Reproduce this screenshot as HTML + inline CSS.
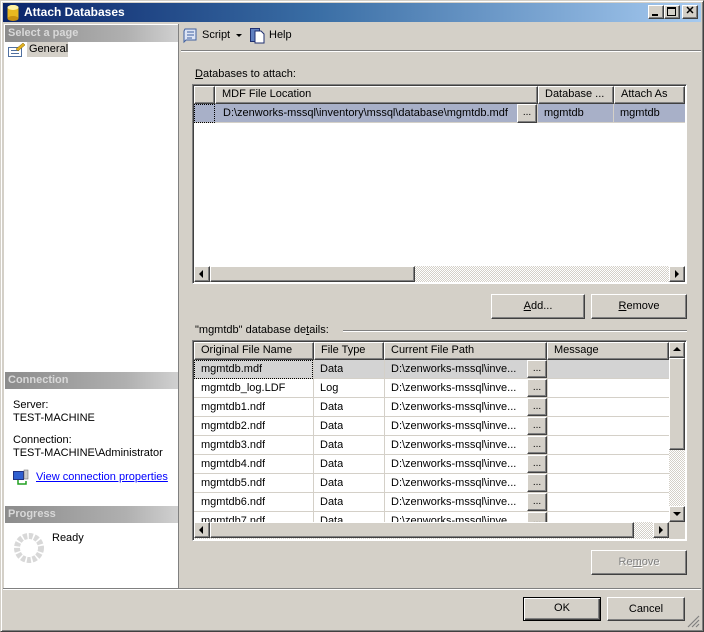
<!DOCTYPE html>
<html><head><meta charset="utf-8"><style>
*{box-sizing:border-box;margin:0;padding:0}
body{width:704px;height:632px;overflow:hidden;background:#d4d0c8;font-family:"Liberation Sans",Arial,sans-serif;font-size:11px;color:#000;position:relative}
.a{position:absolute}
.btn{position:absolute;background:#d4d0c8;border:1px solid;border-color:#fff #404040 #404040 #fff;box-shadow:inset -1px -1px 0 #808080;text-align:center}
.hd{position:absolute;background:#d4d0c8;border:1px solid;border-color:#fff #404040 #404040 #fff;box-shadow:inset -1px -1px 0 #808080;padding-left:6px;line-height:15px;white-space:nowrap;overflow:hidden}
.ph{position:absolute;left:5px;width:173px;height:17px;background:linear-gradient(90deg,#8c8c8c,#b0b0b0 70%,#d0d0d0);color:#d8d8d8;font-weight:bold;font-size:11px;padding-left:3px;line-height:17px}
.cell{position:absolute;white-space:nowrap;overflow:hidden;line-height:18px}
.row{position:absolute;left:194px;width:475px;height:19px;border-bottom:1px solid #d4d0c8;background:#fff}
.dots{position:absolute;width:20px;height:18px;background:#d4d0c8;border:1px solid;border-color:#fff #404040 #404040 #fff;box-shadow:inset -1px -1px 0 #808080;text-align:center;line-height:16px;font-size:10px}
.hatch{background:repeating-conic-gradient(#d4d0c8 0 25%,#fff 0 50%) 0 0/2px 2px}
.arr{position:absolute;width:16px;height:16px;background:#d4d0c8;border:1px solid;border-color:#fff #404040 #404040 #fff;box-shadow:inset -1px -1px 0 #808080}
</style></head><body>
<!-- window frame -->
<div class="a" style="left:0;top:0;width:704px;height:632px;border:1px solid;border-color:#d4d0c8 #404040 #404040 #d4d0c8;box-shadow:inset 1px 1px 0 #fff,inset -1px -1px 0 #808080"></div>
<div class="a" style="left:3px;top:3px;width:698px;height:19px;background:linear-gradient(90deg,#0a246a,#3a6ea5 45%,#a6caf0)"></div>
<svg class="a" style="left:6px;top:4px" width="14" height="17"><ellipse cx="7" cy="3.5" rx="5.5" ry="2.5" fill="#f8e080"/><rect x="1.5" y="3.5" width="11" height="11" fill="#e8b820"/><ellipse cx="7" cy="14.5" rx="5.5" ry="2.5" fill="#c89010"/><ellipse cx="7" cy="3.5" rx="5.5" ry="2.5" fill="#fff0a0"/></svg>
<div class="a" style="left:24px;top:5px;color:#fff;font-weight:bold;font-size:12px">Attach Databases</div>
<div class="btn" style="left:648px;top:5px;width:16px;height:14px"><div class="a" style="left:3px;top:8px;width:6px;height:2px;background:#000"></div></div>
<div class="btn" style="left:664px;top:5px;width:16px;height:14px"><div class="a" style="left:2px;top:1px;width:9px;height:9px;border:1px solid #000;border-top-width:2px"></div></div>
<div class="btn" style="left:682px;top:5px;width:16px;height:14px;font-weight:bold;font-size:11px;line-height:11px">✕</div>

<!-- left panel -->
<div class="a" style="left:4px;top:24px;width:175px;height:565px;background:#fff;border-right:1px solid #808080"></div>
<div class="ph" style="top:25px">Select a page</div>
<svg class="a" style="left:8px;top:43px" width="17" height="14"><rect x="0.5" y="4.5" width="13" height="9" fill="#fff" stroke="#5070a0"/><line x1="3" y1="7.5" x2="11" y2="7.5" stroke="#5070a0"/><line x1="3" y1="10.5" x2="11" y2="10.5" stroke="#5070a0"/><path d="M8 6 L15 0 L17 2 L10 8Z" fill="#e0b020" stroke="#806000" stroke-width=".5"/></svg>
<div class="a" style="left:27px;top:42px;width:41px;height:15px;background:#d4d0c8;padding-left:2px;line-height:15px">General</div>
<div class="ph" style="top:372px">Connection</div>
<div class="a" style="left:13px;top:399px;line-height:13px">Server:<br>TEST-MACHINE</div>
<div class="a" style="left:13px;top:434px;line-height:13px">Connection:<br>TEST-MACHINE\Administrator</div>
<svg class="a" style="left:13px;top:469px" width="17" height="16"><rect x="0.5" y="2.5" width="10" height="8" fill="#3060d0" stroke="#203080"/><rect x="11" y="1" width="4" height="9" fill="#ccc" stroke="#666" stroke-width=".5"/><path d="M5 11v4h8v-3" stroke="#20a020" stroke-width="1.5" fill="none"/></svg>
<div class="a" style="left:36px;top:471px;color:#0000ff;text-decoration:underline">View connection properties</div>
<div class="ph" style="top:506px">Progress</div>
<svg class="a" style="left:13px;top:532px" width="32" height="32"><circle cx="16" cy="16" r="12" fill="none" stroke="#d8d8d8" stroke-width="6" stroke-dasharray="4 1.6"/></svg>
<div class="a" style="left:52px;top:532px">Ready</div>

<!-- toolbar -->
<div class="a" style="left:181px;top:50px;width:520px;height:1px;background:#808080"></div>
<div class="a" style="left:181px;top:51px;width:520px;height:1px;background:#fff"></div>
<svg class="a" style="left:182px;top:27px" width="17" height="17"><path d="M3 2h11v11H4l-2 2V4z" fill="#dde4f4" stroke="#4060a0"/><path d="M5 5h7M5 8h7M5 11h5" stroke="#4060a0"/></svg>
<div class="a" style="left:202px;top:29px">Script</div>
<div class="a" style="left:236px;top:34px;border:3px solid transparent;border-top:3px solid #000"></div>
<svg class="a" style="left:249px;top:27px" width="17" height="17"><rect x="1.5" y="1.5" width="9" height="13" fill="#6080c0" stroke="#203070"/><path d="M6 4h6l3 3v9H6z" fill="#fff" stroke="#203070"/></svg>
<div class="a" style="left:269px;top:29px">Help</div>

<!-- grid 1 -->
<div class="a" style="left:195px;top:68px"><u>D</u>atabases to attach:</div>
<div class="a" style="left:192px;top:84px;width:495px;height:200px;background:#fff;border:1px solid;border-color:#808080 #fff #fff #808080;box-shadow:inset 1px 1px 0 #404040"></div>
<div class="hd" style="left:194px;top:86px;width:21px;height:18px"></div>
<div class="hd" style="left:215px;top:86px;width:323px;height:18px">MDF File Location</div>
<div class="hd" style="left:538px;top:86px;width:76px;height:18px">Database ...</div>
<div class="hd" style="left:614px;top:86px;width:71px;height:18px">Attach As</div>
<div class="a" style="left:194px;top:104px;width:491px;height:19px;background:#a8b0c8;border-bottom:1px solid #d4d0c8"></div>
<div class="a" style="left:194px;top:104px;width:21px;height:19px;border:1px dotted #000"></div>
<div class="cell" style="left:223px;top:104px">D:\zenworks-mssql\inventory\mssql\database\mgmtdb.mdf</div>
<div class="dots" style="left:517px;top:104px;height:19px">...</div>
<div class="cell" style="left:544px;top:104px">mgmtdb</div>
<div class="cell" style="left:620px;top:104px">mgmtdb</div>
<div class="a" style="left:537px;top:104px;width:1px;height:19px;background:#d4d0c8"></div>
<div class="a" style="left:613px;top:104px;width:1px;height:19px;background:#d4d0c8"></div>
<div class="a hatch" style="left:194px;top:266px;width:491px;height:16px"></div>
<div class="arr" style="left:194px;top:266px"><div class="a" style="left:4px;top:3px;border:4px solid transparent;border-right:4px solid #000;border-left:0"></div></div>
<div class="btn" style="left:210px;top:266px;width:205px;height:16px"></div>
<div class="arr" style="left:669px;top:266px"><div class="a" style="left:5px;top:3px;border:4px solid transparent;border-left:4px solid #000;border-right:0"></div></div>

<div class="btn" style="left:491px;top:294px;width:94px;height:25px;line-height:22px"><u>A</u>dd...</div>
<div class="btn" style="left:591px;top:294px;width:96px;height:25px;line-height:22px"><u>R</u>emove</div>

<!-- grid 2 -->
<div class="a" style="left:195px;top:324px">"mgmtdb" database de<u>t</u>ails:</div>
<div class="a" style="left:343px;top:330px;width:344px;height:1px;background:#808080"></div>
<div class="a" style="left:343px;top:331px;width:344px;height:1px;background:#fff"></div>
<div class="a" style="left:192px;top:340px;width:495px;height:201px;background:#fff;border:1px solid;border-color:#808080 #fff #fff #808080;box-shadow:inset 1px 1px 0 #404040"></div>
<div class="hd" style="left:194px;top:342px;width:120px;height:18px">Original File Name</div>
<div class="hd" style="left:314px;top:342px;width:70px;height:18px">File Type</div>
<div class="hd" style="left:384px;top:342px;width:163px;height:18px">Current File Path</div>
<div class="hd" style="left:547px;top:342px;width:122px;height:18px">Message</div>

<div class="row" style="top:360px;background:#d3d3d3"></div>
<div class="a" style="left:194px;top:360px;width:119px;height:19px;border:1px dotted #000"></div>
<div class="row" style="top:379px"></div><div class="row" style="top:398px"></div><div class="row" style="top:417px"></div><div class="row" style="top:436px"></div><div class="row" style="top:455px"></div><div class="row" style="top:474px"></div><div class="row" style="top:493px"></div><div class="row" style="top:512px;height:10px;border:0"></div>
<div class="a" style="left:313px;top:360px;width:1px;height:162px;background:#d4d0c8"></div>
<div class="a" style="left:384px;top:360px;width:1px;height:162px;background:#d4d0c8"></div>
<div class="a" style="left:547px;top:360px;width:1px;height:162px;background:#d4d0c8"></div>

<div class="cell" style="left:201px;top:360px">mgmtdb.mdf</div><div class="cell" style="left:320px;top:360px">Data</div><div class="cell" style="left:391px;top:360px">D:\zenworks-mssql\inve...</div><div class="dots" style="left:527px;top:360px">...</div>
<div class="cell" style="left:201px;top:379px">mgmtdb_log.LDF</div><div class="cell" style="left:320px;top:379px">Log</div><div class="cell" style="left:391px;top:379px">D:\zenworks-mssql\inve...</div><div class="dots" style="left:527px;top:379px">...</div>
<div class="cell" style="left:201px;top:398px">mgmtdb1.ndf</div><div class="cell" style="left:320px;top:398px">Data</div><div class="cell" style="left:391px;top:398px">D:\zenworks-mssql\inve...</div><div class="dots" style="left:527px;top:398px">...</div>
<div class="cell" style="left:201px;top:417px">mgmtdb2.ndf</div><div class="cell" style="left:320px;top:417px">Data</div><div class="cell" style="left:391px;top:417px">D:\zenworks-mssql\inve...</div><div class="dots" style="left:527px;top:417px">...</div>
<div class="cell" style="left:201px;top:436px">mgmtdb3.ndf</div><div class="cell" style="left:320px;top:436px">Data</div><div class="cell" style="left:391px;top:436px">D:\zenworks-mssql\inve...</div><div class="dots" style="left:527px;top:436px">...</div>
<div class="cell" style="left:201px;top:455px">mgmtdb4.ndf</div><div class="cell" style="left:320px;top:455px">Data</div><div class="cell" style="left:391px;top:455px">D:\zenworks-mssql\inve...</div><div class="dots" style="left:527px;top:455px">...</div>
<div class="cell" style="left:201px;top:474px">mgmtdb5.ndf</div><div class="cell" style="left:320px;top:474px">Data</div><div class="cell" style="left:391px;top:474px">D:\zenworks-mssql\inve...</div><div class="dots" style="left:527px;top:474px">...</div>
<div class="cell" style="left:201px;top:493px">mgmtdb6.ndf</div><div class="cell" style="left:320px;top:493px">Data</div><div class="cell" style="left:391px;top:493px">D:\zenworks-mssql\inve...</div><div class="dots" style="left:527px;top:493px">...</div>
<div class="a" style="left:194px;top:512px;width:475px;height:10px;overflow:hidden">
<div class="cell" style="left:7px;top:0">mgmtdb7.ndf</div><div class="cell" style="left:126px;top:0">Data</div><div class="cell" style="left:197px;top:0">D:\zenworks-mssql\inve...</div><div class="dots" style="left:333px;top:0">...</div></div>

<div class="a hatch" style="left:669px;top:342px;width:16px;height:180px"></div>
<div class="arr" style="left:669px;top:342px"><div class="a" style="left:3px;top:4px;border:4px solid transparent;border-bottom:4px solid #000;border-top:0"></div></div>
<div class="btn" style="left:669px;top:358px;width:16px;height:92px"></div>
<div class="arr" style="left:669px;top:506px"><div class="a" style="left:3px;top:5px;border:4px solid transparent;border-top:4px solid #000;border-bottom:0"></div></div>
<div class="a hatch" style="left:194px;top:522px;width:475px;height:17px"></div>
<div class="arr" style="left:194px;top:522px"><div class="a" style="left:4px;top:3px;border:4px solid transparent;border-right:4px solid #000;border-left:0"></div></div>
<div class="btn" style="left:210px;top:522px;width:424px;height:16px"></div>
<div class="arr" style="left:653px;top:522px"><div class="a" style="left:5px;top:3px;border:4px solid transparent;border-left:4px solid #000;border-right:0"></div></div>
<div class="a" style="left:669px;top:522px;width:16px;height:17px;background:#d4d0c8"></div>

<div class="btn" style="left:591px;top:550px;width:96px;height:25px;line-height:22px;color:#808080;text-shadow:1px 1px 0 #fff">Re<u>m</u>ove</div>

<!-- bottom -->
<div class="a" style="left:3px;top:588px;width:698px;height:1px;background:#808080"></div>
<div class="a" style="left:3px;top:589px;width:698px;height:1px;background:#fff"></div>
<div class="btn" style="left:523px;top:597px;width:78px;height:24px;line-height:20px;border-color:#000;box-shadow:inset 1px 1px 0 #fff,inset -1px -1px 0 #404040,inset -2px -2px 0 #808080">OK</div>
<div class="btn" style="left:607px;top:597px;width:78px;height:24px;line-height:22px">Cancel</div>
<svg class="a" style="left:687px;top:615px" width="13" height="13"><path d="M12 1L1 12M12 5L5 12M12 9L9 12" stroke="#808080" stroke-width="1.2"/></svg>
</body></html>
